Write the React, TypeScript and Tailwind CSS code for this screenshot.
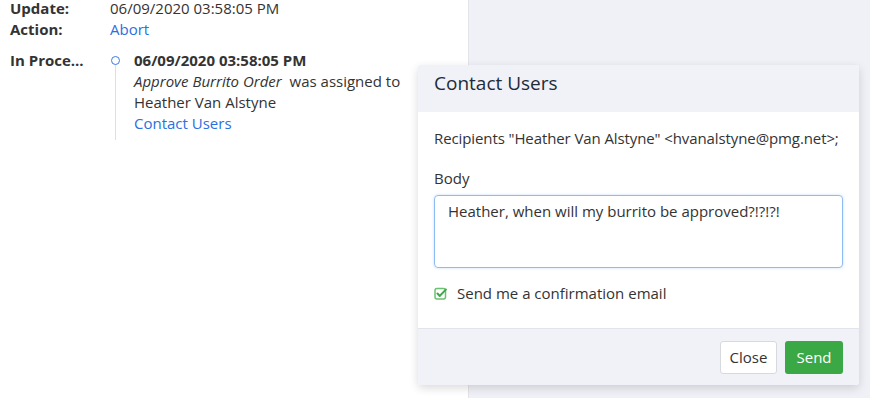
import type { ReactNode } from "react";

function Field({ label, children }: { label: string; children: ReactNode }) {
  return (
    <div className="flex">
      <div className="w-[100px] shrink-0 font-bold">{label}</div>
      <div className="flex-1">{children}</div>
    </div>
  );
}

function CheckIcon() {
  return (
    <svg width="13" height="13" viewBox="0 0 13 13" className="shrink-0">
      <rect x="1" y="1.5" width="10.5" height="10.5" rx="2" fill="none" stroke="#6cc070" strokeWidth="1.5" />
      <path d="M3.5 6.6 L5.8 8.9 L11.8 2.6" fill="none" stroke="#3fa94a" strokeWidth="2.1" strokeLinecap="round" strokeLinejoin="round" />
    </svg>
  );
}

function ContactUsersModal() {
  return (
    <div className="absolute left-[418px] top-[65px] w-[441px] rounded-[3px] bg-white shadow-[0_3px_10px_rgba(0,0,0,0.15)] overflow-hidden">
      <div className="h-[47px] bg-[#f0f2f7] px-4 pt-[5px]">
        <h2 className="text-[19px] leading-[26px] text-[#1d2b3a]">Contact Users</h2>
      </div>
      <div className="px-4 pt-[16px] pb-[24px] leading-[21px]">
        <p className="whitespace-nowrap tracking-[-0.1px]">
          Recipients "Heather Van Alstyne" &lt;hvanalstyne@pmg.net&gt;;
        </p>
        <p className="mt-[19px]">Body</p>
        <div className="mt-[6px] h-[73px] rounded-[4px] border border-[#8cbcf2] shadow-[0_0_3px_rgba(100,160,230,0.35)] px-[13px] py-[5px]">
          Heather, when will my burrito be approved?!?!?!
        </div>
        <label className="mt-[15px] flex items-center gap-[10px]">
          <CheckIcon />
          <span>Send me a confirmation email</span>
        </label>
      </div>
      <div className="h-[57px] bg-[#f0f2f7] border-t border-[#e1e4ea] flex items-center justify-end gap-2 pr-[16px]">
        <button className="h-[33px] w-[57px] rounded-[3px] border border-[#d6d9de] bg-white text-[#333]">Close</button>
        <button className="h-[33px] w-[58px] rounded-[3px] bg-[#3aa845] text-white">Send</button>
      </div>
    </div>
  );
}

export default function App() {
  return (
    <div className="relative h-screen w-full flex bg-[#f0f1f6] text-[15px] text-[#333] font-['Open_Sans',sans-serif] overflow-hidden">
      <div className="w-[469px] shrink-0 bg-white border-r border-[#e2e4e9] pl-[10px] -mt-[2px] leading-[21px]">
        <Field label="Update:">06/09/2020 03:58:05 PM</Field>
        <Field label="Action:">
          <a className="text-[#2a70e0]">Abort</a>
        </Field>
        <div className="mt-[10px]">
          <Field label="In Proce...">
            <div className="relative pl-[24px]">
              <div className="absolute left-[5px] top-[10px] bottom-0 w-px bg-[#dcdfe4]" />
              <div className="absolute left-[1px] top-[6px] h-[9px] w-[9px] rounded-full border-[1.5px] border-[#3b7be0] bg-white" />
              <div className="font-bold">06/09/2020 03:58:05 PM</div>
              <div>
                <i>Approve Burrito Order</i>&nbsp;&nbsp;was assigned to
              </div>
              <div>Heather Van Alstyne</div>
              <div className="pb-[6px]">
                <a className="text-[#2a70e0]">Contact Users</a>
              </div>
            </div>
          </Field>
        </div>
      </div>
      <div className="flex-1" />
      <ContactUsersModal />
    </div>
  );
}
